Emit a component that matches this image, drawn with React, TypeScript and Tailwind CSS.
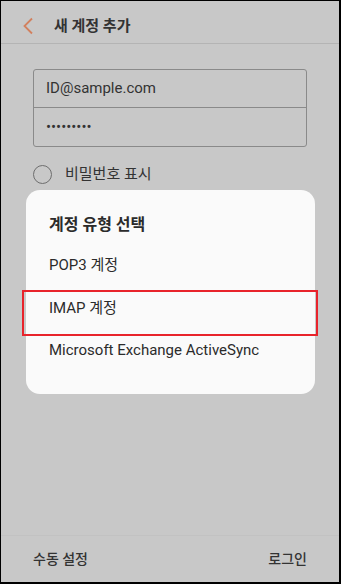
import React from "react";

const font = { fontFamily: 'Roboto, "Noto Sans CJK KR", sans-serif' };

export default function App() {
  return (
    <div
      className="relative w-[341px] h-[584px] overflow-hidden bg-[#c8c8c8] border-l border-t border-r-2 border-b-2 border-black flex flex-col text-[#2b2b2b]"
      style={font}
    >
      {/* Header */}
      <div className="h-[43px] pt-[8px] flex items-center border-b border-[#b4b4b4] shrink-0">
        <svg
          width="12"
          height="18"
          viewBox="0 0 12 18"
          className="ml-[21px]"
          fill="none"
        >
          <path
            d="M10 1.5 L2.5 9 L10 16.5"
            stroke="#d2805e"
            strokeWidth="1.8"
          />
        </svg>
        <span className="ml-[20px] text-[15px] font-semibold text-[#333]">
          새 계정 추가
        </span>
      </div>

      {/* Form */}
      <div className="flex-1 flex flex-col px-[32px] pt-[25px]">
        <div className="border border-[#8a8a8a] rounded-[3px] flex flex-col">
          <div className="h-[38px] flex items-center px-[12px] border-b border-[#8a8a8a] text-[15px] text-[#333]">
            ID@sample.com
          </div>
          <div className="h-[38px] flex items-center px-[12px] text-[15px] text-[#333] tracking-[0px]">
            •••••••••
          </div>
        </div>
        <div className="mt-[16px] flex items-center">
          <div className="w-[19px] h-[19px] rounded-full border-[1.5px] border-[#6e6e6e]" />
          <span className="ml-[13px] text-[15px] text-[#333]">비밀번호 표시</span>
        </div>
      </div>

      {/* Footer */}
      <div className="h-[47px] shrink-0 border-t border-[#c2c2c2] flex items-center justify-between px-[32px] text-[14px] font-medium text-[#333]">
        <span>수동 설정</span>
        <span>로그인</span>
      </div>

      {/* Dialog */}
      <div className="absolute left-[25px] top-[189px] w-[289px] h-[204px] bg-[#fafafa] rounded-[14px] flex flex-col pt-[22px] text-[15px] text-[#2b2b2b]">
        <div className="px-[23px] h-[26px] flex items-center text-[16px] font-bold">
          계정 유형 선택
        </div>
        <div className="px-[23px] mt-[14px] h-[26px] flex items-center">POP3 계정</div>
        <div className="px-[23px] mt-[17px] h-[26px] flex items-center">IMAP 계정</div>
        <div className="px-[23px] mt-[16px] h-[26px] flex items-center">
          Microsoft Exchange ActiveSync
        </div>
      </div>

      {/* Highlight */}
      <div className="absolute left-[21px] top-[289px] w-[296px] h-[46px] border-2 border-[#e8232b]" />
    </div>
  );
}
